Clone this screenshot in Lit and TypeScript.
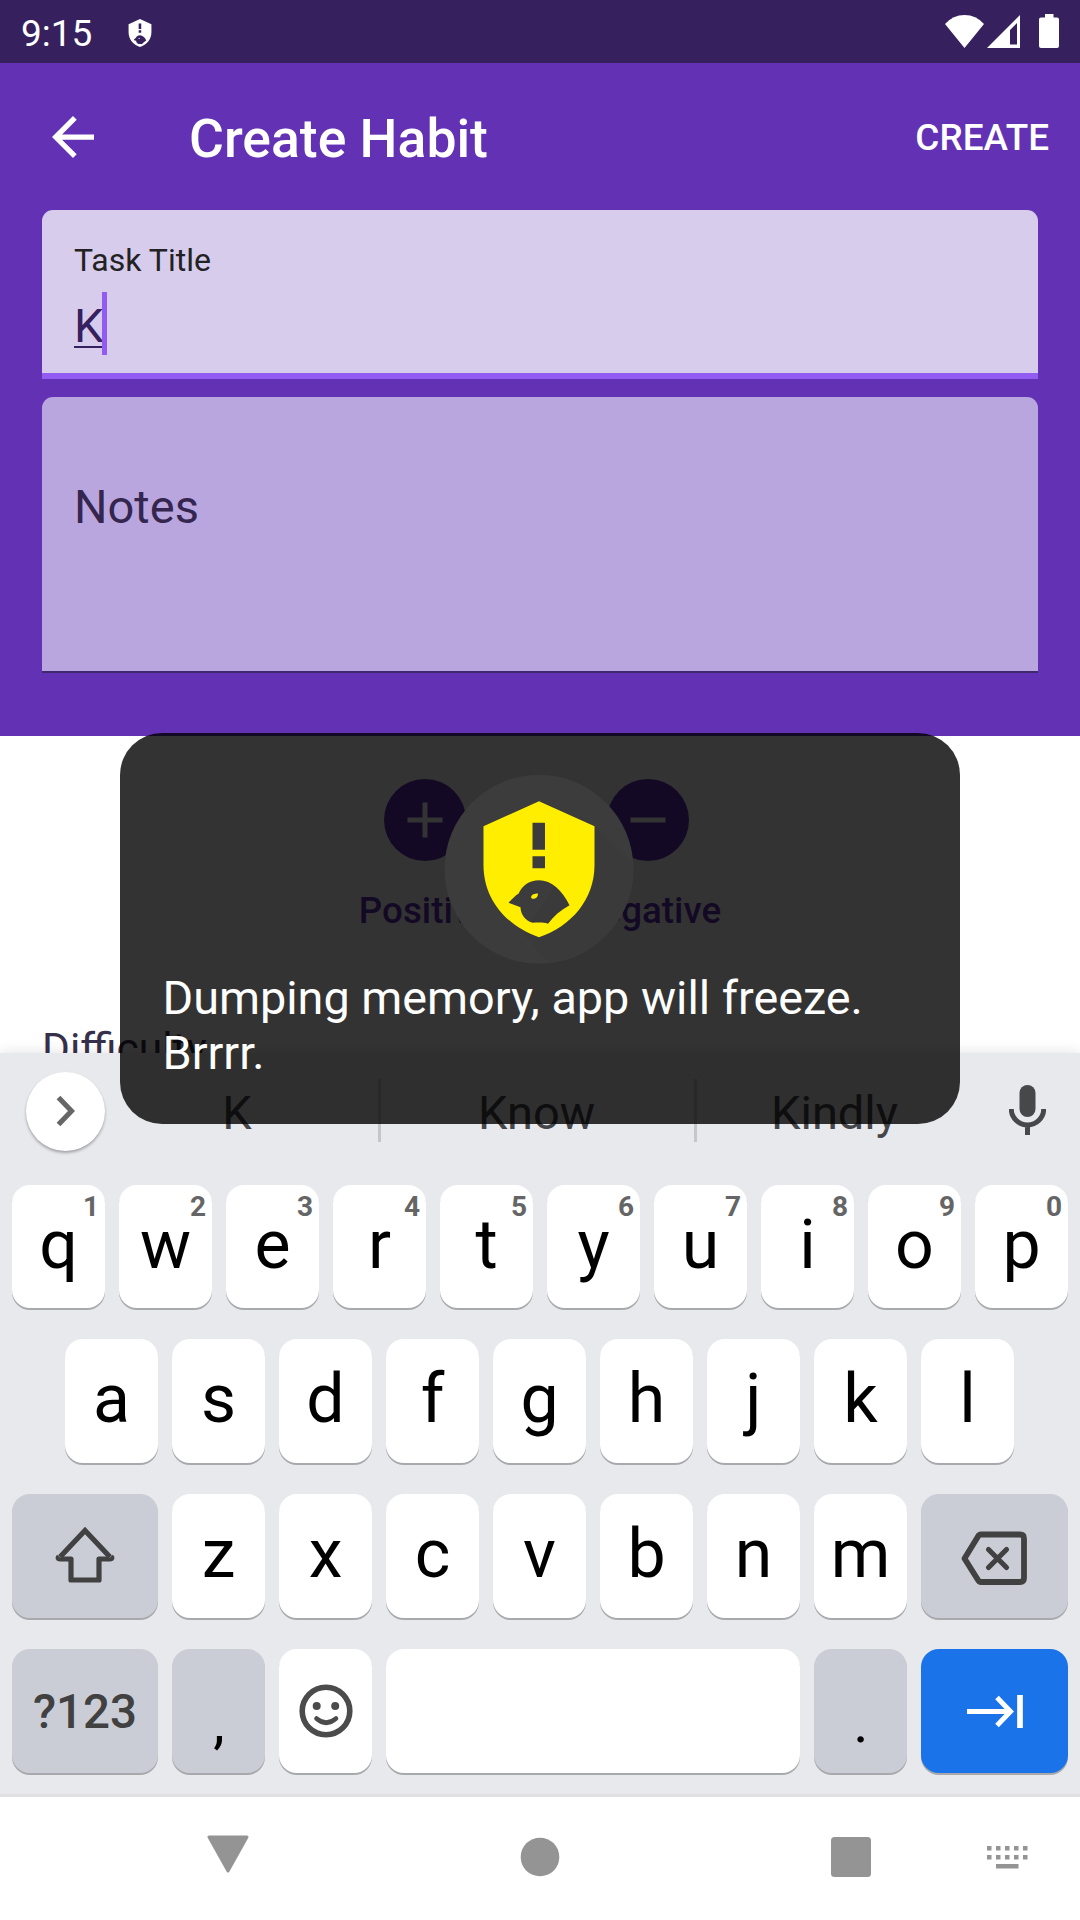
import { LitElement, html, css, svg } from "lit";
import { customElement, property } from "lit/decorators.js";
import { classMap } from "lit/directives/class-map.js";

interface Key {
  label?: string;
  hint?: string;
  kind?: string;
  icon?: string;
}

const shieldPath =
  "M55.5 0 L111 25 V64 C111 98 88 125 55.5 136 C23 125 0 98 0 64 V25 Z " +
  "M49 21.5 V48.5 H61.5 V21.5 Z M49 55 V67 H61.5 V55 Z " +
  "M25 101.5 C29 97.5 32.5 93.5 35 92.5 C39 84 46 79 55.5 79 C68 79 79 89.5 86 104 C77 109 70 115 64.500 122.500 C60 121 55 121.500 49 121.500 C41 119.500 37 112 37 106 C33 104.500 29 103 25 101.500 Z " +
  "M47.500 96 C48 93 51 92.500 54.500 92.300 C54.500 96 52 98 48.500 97.500 Z";

const icons: Record<string, unknown> = {
  shift: svg`<svg class="up" width="62" height="62" viewBox="0 0 62 62" fill="none" stroke="#414141" stroke-width="5.200" stroke-linejoin="round"><path stroke-linejoin="miter" d="M6 33 L31 6.500 L56 33"/><path d="M5 32.500 C3 34.500 5 35 6.500 35 H17 V56 H45 V35 H55.500 C57 35 59 34.500 57 32.500"/></svg>`,
  backspace: svg`<svg class="del" width="68" height="54" viewBox="0 0 68 54" fill="none" stroke="#414141" stroke-width="5.800"><path stroke-linejoin="round" d="M21 3.500 H60 Q64 3.500 64 7.500 V47 Q64 51 60 51 H21 Q19 51 18 49 L4.500 27.500 L18 5.500 Q19 3.500 21 3.500Z"/><path stroke-linecap="round" stroke-width="5.200" d="M28.500 18.500 L46.500 36.500 M46.500 18.500 L28.500 36.500"/></svg>`,
  emoji: svg`<svg width="54" height="54" viewBox="0 0 54 54"><circle cx="27" cy="27" r="23.800" fill="none" stroke="#4b4b4b" stroke-width="5.600"/><circle cx="17.700" cy="22" r="4" fill="#4b4b4b"/><circle cx="36.200" cy="22" r="4" fill="#4b4b4b"/><path d="M17.500 34.500 Q27 43 37 34.500" fill="none" stroke="#4b4b4b" stroke-width="4.600" stroke-linecap="round"/></svg>`,
  tab: svg`<svg width="56" height="33" viewBox="0 0 56 33" fill="none" stroke="#fff" stroke-width="5"><path d="M0 16.500 H43"/><path d="M30 2.500 L43.500 16.500 L30 30.500"/><path d="M53 0 V33" stroke-width="5.700"/></svg>`,
};

const rows: Key[][] = [
  [..."qwertyuiop"].map((label, i) => ({ label, hint: String((i + 1) % 10) })),
  [..."asdfghjkl"].map((label) => ({ label })),
  [
    { icon: "shift", kind: "wide grey" },
    ...[..."zxcvbnm"].map((label) => ({ label })),
    { icon: "backspace", kind: "wide grey" },
  ],
  [
    { label: "?123", kind: "wide grey symbols" },
    { label: ",", kind: "grey punct" },
    { icon: "emoji" },
    { kind: "space" },
    { label: ".", kind: "grey punct" },
    { icon: "tab", kind: "wide enter" },
  ],
];

@customElement("keyboard-key")
class KeyboardKey extends LitElement {
  @property({ attribute: false }) data: Key = {};
  static styles = css`
    :host { display: grid; }
    .key {
      position: relative; box-sizing: border-box; border-radius: 18px;
      background: #fff; box-shadow: 0 2px 0 #a8a9ac; color: #000;
      display: flex; align-items: center; justify-content: center;
      font: 400 68px/80px Roboto, sans-serif; padding-bottom: 4px;
    }
    .key svg { display: block; margin-top: 4px; }
    .key svg.up { margin-top: 2px; }
    .key svg.del { margin: 8px 2px 0 0; }
    .grey { background: #cbcdd6; }
    .enter { background: #1a73e8; }
    .symbols { font-size: 47.500px; font-weight: 500; color: #414141; padding: 2px 0 0; }
    .hint {
      position: absolute; right: 6px; top: 5px; color: #656565;
      font: 700 28px/33px Roboto, sans-serif;
    }
    .punct { font-size: 58px; padding: 22px 0 0 1px; }
  `;
  render() {
    const k = this.data;
    const classes: Record<string, boolean> = { key: true };
    for (const c of (k.kind ?? "").split(" ").filter(Boolean)) classes[c] = true;
    return html`<div class=${classMap(classes)}>
      ${k.icon ? icons[k.icon] : k.label}${k.hint ? html`<span class="hint">${k.hint}</span>` : ""}
    </div>`;
  }
}

@customElement("app-root")
class AppRoot extends LitElement {
  static styles = css`
    :host { display: block; font-family: Roboto, sans-serif; }
    * { box-sizing: border-box; }
    svg { display: block; flex: none; }
    .screen { position: relative; width: 1080px; height: 1920px; overflow: hidden; background: #fff; display: flex; flex-direction: column; }
    .status { height: 63px; flex: none; background: #36205d; color: #fff; display: flex; align-items: center; padding: 2px 21px 0 21px; }
    .clock { font-size: 37px; line-height: 44px; width: 107px; margin-top: 2px; }
    .status-right { margin-left: auto; display: flex; align-items: center; margin-top: -3px; }
    .wifi { margin-right: 3px; }
    .signal { margin-right: 19px; }
    .header { height: 673px; flex: none; background: #6331b3; padding: 0 42px; }
    .appbar { height: 147px; display: flex; align-items: center; color: #fff; margin-right: -11px; }
    .back { margin-left: 10px; }
    .title { font-size: 53.500px; line-height: 62px; font-weight: 500; margin-left: 95px; margin-top: 4px; }
    .create { font-size: 36.900px; line-height: 44px; font-weight: 500; margin-left: auto; margin-top: 2px; }
    .field { border-radius: 11px 11px 0 0; padding: 0 32px; }
    .task { height: 169px; background: #d7ccec; border-bottom: 6px solid #925cf3; padding-top: 31px; }
    .label { font-size: 32px; line-height: 38px; color: #222; }
    .entry { display: flex; align-items: center; height: 63px; margin-top: 13px; }
    .typed { font-size: 47px; line-height: 56px; margin-top: 4px; color: #36205d; text-decoration: underline; text-decoration-thickness: 2px; text-underline-offset: 4px; }
    .caret { width: 5px; height: 63px; background: #925cf3; margin-left: -2px; }
    .notes { height: 276px; margin-top: 18px; background: #baa6de; border-bottom: 2px solid #3f2870; display: flex; padding-top: 82px; font-size: 47px; line-height: 56px; color: #34264f; }
    .content { height: 317px; flex: none; overflow: hidden; display: flex; flex-direction: column; }
    .choices { display: flex; justify-content: center; padding-top: 43px; gap: 85px; }
    .choice { display: flex; flex-direction: column; align-items: center; color: #6331b3; font-size: 36.750px; line-height: 44px; font-weight: 500; gap: 28px; }
    .difficulty { font-size: 42.500px; line-height: 50px; color: #36304a; margin: 91px 0 0 42px; height: 50px; }
    .keyboard { height: 741px; flex: none; background: #e8e9ed; display: flex; flex-direction: column; position: relative; box-shadow: 0 0 14px rgba(0,0,0,.12); }
    .strip { height: 132px; flex: none; display: grid; grid-template-columns: 79px 273px 3px 313px 3px 277px 37px; padding: 0 0 16px 26px; align-items: center; }
    .expand { width: 79px; height: 79px; border-radius: 50%; background: #fff; box-shadow: 0 2px 3px rgba(0,0,0,.3); display: flex; align-items: center; justify-content: center; }
    .word { font-size: 47px; line-height: 56px; color: #45464a; text-align: center; padding: 3px 2px 0 0; }
    .word.first { padding-right: 9px; }
    .sep { height: 63px; background: #c5c6ca; margin-top: -1px; }
    .mic { margin-left: 35px; margin-top: -2px; }
    .rows { display: grid; grid-template-rows: 123px 124px 124px 124px; gap: 31px; padding: 0 12px; }
    .row { display: grid; grid-auto-flow: column; column-gap: 14px; }
    .r0 { grid-template-columns: repeat(10, 93px); }
    .r1 { grid-template-columns: repeat(9, 93px); padding-left: 53px; }
    .r2 { grid-template-columns: 146px repeat(7, 93px) 147px; }
    .r3 { grid-template-columns: 146px 93px 93px 414px 93px 147px; }
    .nav { height: 126px; flex: none; background: #fff; border-top: 3px solid #e0e0e0; display: grid; grid-template-columns: 207px 42px 271px 40px 271px 40px 116px 41px; align-items: center; position: relative; padding-bottom: 4px; }
    .nav .tri { margin-top: -5px; }
    .nav .keys { margin-top: 2px; }
    .toast { position: absolute; left: 120px; top: 733px; width: 840px; height: 391px; border-radius: 42px; background: rgba(0,0,0,.8); padding: 41px 40px 0 42.500px; color: #fff; }
    .badge { margin: 0 0 0 281.500px; }
    .message { font-size: 46.750px; line-height: 55px; margin-top: 7px; white-space: pre-line; }
  `;

  render() {
    return html`<div class="screen">
      <div class="status">
        <span class="clock">9:15</span>
        <svg width="24" height="28" viewBox="0 0 111 136"><path fill="#fff" fill-rule="evenodd" d=${shieldPath} /></svg>
        <div class="status-right">
          <svg class="wifi" width="39" height="33" viewBox="0 0 39 33"><path fill="#fff" d="M0 9 Q8 0 19.500 0 Q31 0 39 9 L19.500 33Z" /></svg>
          <svg class="signal" width="33" height="33" viewBox="0 0 33 33"><path fill="#fff" fill-rule="evenodd" d="M0 33 L33 0 V33Z M23 15 V29.500 H30 V8Z" /></svg>
          <svg width="20" height="34" viewBox="0 0 20 34"><path fill="#fff" d="M6 0 H14.500 V3.500 H18 Q20 3.500 20 5.500 V32 Q20 34 18 34 H2 Q0 34 0 32 V5.500 Q0 3.500 2 3.500 H6Z" /></svg>
        </div>
      </div>
      <div class="header">
        <div class="appbar">
          <svg class="back" width="42" height="42" viewBox="4 4 16 16"><path fill="#fff" d="M20 11H7.830l5.590-5.590L12 4l-8 8 8 8 1.410-1.410L7.830 13H20v-2z" /></svg>
          <span class="title">Create Habit</span>
          <span class="create">CREATE</span>
        </div>
        <div class="field task">
          <div class="label">Task Title</div>
          <div class="entry"><span class="typed">K</span><span class="caret"></span></div>
        </div>
        <div class="field notes">Notes</div>
      </div>
      <div class="content">
        <div class="choices">
          <div class="choice">
            <svg width="82" height="82" viewBox="0 0 82 82"><circle cx="41" cy="41" r="41" fill="#6331b3" /><path d="M41 23.500V58.500M23.500 41H58.500" stroke="#fff" stroke-width="5" /></svg>
            <span>Positive</span>
          </div>
          <div class="choice">
            <svg width="82" height="82" viewBox="0 0 82 82"><circle cx="41" cy="41" r="41" fill="#6331b3" /><path d="M23.500 41H58.500" stroke="#fff" stroke-width="5" /></svg>
            <span>Negative</span>
          </div>
        </div>
        <div class="difficulty">Difficulty</div>
      </div>
      <div class="keyboard">
        <div class="strip">
          <div class="expand"><svg width="19" height="32" viewBox="0 0 19 32"><path d="M2.500 2.500L15.500 16L2.500 29.500" fill="none" stroke="#666" stroke-width="5.200" /></svg></div>
          <span class="word first">K</span><span class="sep"></span>
          <span class="word">Know</span><span class="sep"></span>
          <span class="word">Kindly</span>
          <svg class="mic" width="37" height="50" viewBox="0 0 37 50"><rect x="10.500" width="16" height="32" rx="8" fill="#47484a" /><path d="M2.300 24 A16.200 16 0 0 0 34.700 24 M18.500 40V50" fill="none" stroke="#47484a" stroke-width="5" /></svg>
        </div>
        <div class="rows">
          ${rows.map((row, i) => html`<div class="row r${i}">${row.map((k) => html`<keyboard-key .data=${k}></keyboard-key>`)}</div>`)}
        </div>
      </div>
      <div class="nav">
        <span></span>
        <svg class="tri" width="42" height="38" viewBox="0 0 42 38"><path d="M2 2H40L21 36Z" fill="#949494" stroke="#949494" stroke-width="3" stroke-linejoin="round" /></svg>
        <span></span>
        <svg width="40" height="40" viewBox="0 0 40 40"><circle cx="20" cy="20" r="19.300" fill="#949494" /></svg>
        <span></span>
        <svg width="40" height="40" viewBox="0 0 40 40"><rect width="40" height="40" rx="3.500" fill="#949494" /></svg>
        <span></span>
        <svg class="keys" width="41" height="23" viewBox="0 0 41 23" fill="#949494">
          ${[0, 9, 18, 27, 36].map((x) => svg`<rect x=${x} y="0" width="4.500" height="4.500"/><rect x=${x} y="9" width="4.500" height="4.500"/>`)}
          <rect x="9" y="18" width="22.500" height="4.500" />
        </svg>
      </div>
      <div class="toast">
        <svg class="badge" width="190" height="190" viewBox="0 0 190 190">
          <circle cx="95" cy="95.200" r="94.500" fill="#3c3c3c" />
          <path d="M150 52 L189.300 91 A94.500 94.500 0 0 1 105 189.200 L80 160 Z" fill="#3a3a3a" />
          <g transform="translate(39.500 27.200)"><path fill="#ffee00" fill-rule="evenodd" d=${shieldPath} /></g>
        </svg>
        <div class="message">Dumping memory, app will freeze.
Brrrr.</div>
      </div>
    </div>`;
  }
}
